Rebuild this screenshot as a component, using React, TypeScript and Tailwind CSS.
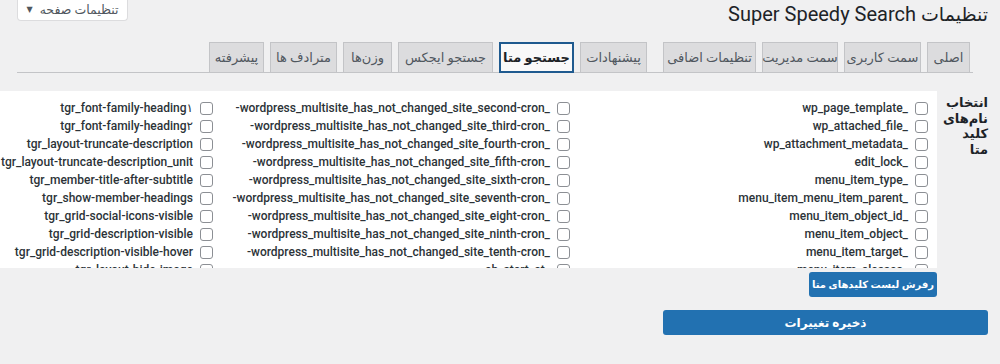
import React from 'react'

const tabs = [
  { label: 'اصلی', w: 43 },
  { label: 'سمت کاربری', w: 77 },
  { label: 'سمت مدیریت', w: 76 },
  { label: 'تنظیمات اضافی', w: 93 },
  { label: 'پیشنهادات', w: 67 },
  { label: 'جستجو متا', w: 75, active: true },
  { label: 'جستجو ایجکس', w: 95 },
  { label: 'وزن‌ها', w: 49 },
  { label: 'مترادف ها', w: 67 },
  { label: 'پیشرفته', w: 55 },
]

const columns: string[][] = [
  [
    'wp_page_template_',
    'wp_attached_file_',
    'wp_attachment_metadata_',
    'edit_lock_',
    'menu_item_type_',
    'menu_item_menu_item_parent_',
    'menu_item_object_id_',
    'menu_item_object_',
    'menu_item_target_',
    'menu_item_classes_',
  ],
  [
    '-wordpress_multisite_has_not_changed_site_second-cron_',
    '-wordpress_multisite_has_not_changed_site_third-cron_',
    '-wordpress_multisite_has_not_changed_site_fourth-cron_',
    '-wordpress_multisite_has_not_changed_site_fifth-cron_',
    '-wordpress_multisite_has_not_changed_site_sixth-cron_',
    '-wordpress_multisite_has_not_changed_site_seventh-cron_',
    '-wordpress_multisite_has_not_changed_site_eight-cron_',
    '-wordpress_multisite_has_not_changed_site_ninth-cron_',
    '-wordpress_multisite_has_not_changed_site_tenth-cron_',
    'ab_start_at_',
  ],
  [
    'tgr_font-family-heading۱',
    'tgr_font-family-heading۲',
    'tgr_layout-truncate-description',
    'tgr_layout-truncate-description_unit',
    'tgr_member-title-after-subtitle',
    'tgr_show-member-headings',
    'tgr_grid-social-icons-visible',
    'tgr_grid-description-visible',
    'tgr_grid-description-visible-hover',
    'tgr_layout-hide-image',
  ],
]

function MetaKey({ name }: { name: string }) {
  return (
    <label className="flex items-center gap-[7px] h-[18px] whitespace-nowrap">
      <input
        type="checkbox"
        className="appearance-none w-[13px] h-[13px] shrink-0 rounded-[3px] border border-[#8c8f94] bg-white m-0"
      />
      <span dir="ltr" className="text-[12px] font-medium text-[#2c3338]">
        {name}
      </span>
    </label>
  )
}

export default function App() {
  return (
    <div
      dir="rtl"
      className="w-[1000px] h-[364px] overflow-hidden bg-[#f0f0f1] pr-[12px] pl-[17px] font-['Roboto','DejaVu_Sans',sans-serif]"
    >
      <div className="flex justify-between items-start h-[42px]">
        <h1 className="pt-[1px] text-[20px] leading-[26px] text-[#1d2327] whitespace-nowrap">
          <span className="text-[19px]">تنظیمات</span> Super Speedy Search
        </h1>
        <button className="flex items-center gap-[7px] w-[111px] h-[21px] justify-center bg-white border border-t-0 border-[#dcdcde] rounded-b-[4px] text-[12.5px] text-[#50575e]">
          <span>تنظیمات صفحه</span>
          <span className="text-[8px]">▼</span>
        </button>
      </div>

      <div className="flex items-end gap-[6px] h-[31px] border-b border-[#c3c4c7] mr-[15px] pr-[3px]">
        {tabs.map((t, i) => (
          <div
            key={t.label}
            style={{ width: t.w, marginLeft: i === 3 ? 10 : 0 }}
            className={
              t.active
                ? 'h-[31px] -mb-[1px] flex items-center justify-center border-2 border-[#1f5a8f] bg-[#f9f9f9] text-[13px] font-bold text-[#1d2327] whitespace-nowrap'
                : 'h-[30px] flex items-center justify-center border border-b-0 border-[#c3c4c7] bg-[#dcdcde] text-[13px] text-[#50575e] whitespace-nowrap'
            }
          >
            {t.label}
          </div>
        ))}
      </div>

      <div className="flex mt-[18px]">
        <div className="w-[51px] shrink-0 pt-[4px] text-[13px] font-bold leading-[15.5px] text-[#1d2327] whitespace-nowrap">
          انتخاب
          <br />
          نام‌های
          <br />
          کلید
          <br />
          متا
        </div>
        <div className="flex-1 min-w-0">
          <div className="w-[960px] h-[177px] overflow-hidden bg-white pt-[8px] pr-[9px]">
            <div className="flex">
              {columns.map((col, i) => (
                <div key={i} className={i === 0 ? 'w-[358px] shrink-0' : 'w-[357px] shrink-0'}>
                  {col.map((k) => (
                    <MetaKey key={k} name={k} />
                  ))}
                </div>
              ))}
            </div>
          </div>
          <button className="mt-[4px] w-[128px] h-[25px] rounded-[3px] bg-[#2271b1] text-white text-[10px] font-bold whitespace-nowrap">
            رفرش لیست کلیدهای متا
          </button>
        </div>
      </div>

      <button className="mt-[13px] w-[325px] h-[25px] rounded-[3px] bg-[#2271b1] text-white text-[12px] font-bold">
        ذخیره تغییرات
      </button>
    </div>
  )
}
